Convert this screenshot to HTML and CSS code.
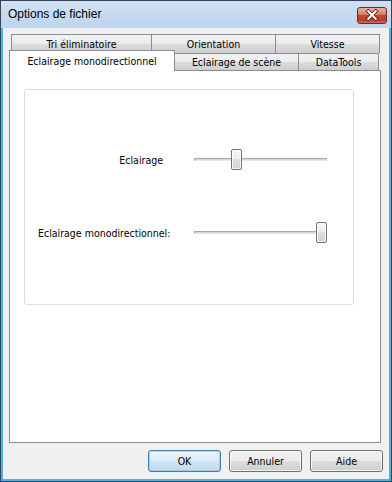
FILE: index.html
```html
<!DOCTYPE html>
<html lang="fr">
<head>
<meta charset="utf-8">
<title>Options de fichier</title>
<link rel="stylesheet" href="styles.css">
</head>
<body>
<div class="window">
  <div class="titlebar">
    <span class="title">Options de fichier</span>
    <div class="close">
      <svg width="30" height="16" viewBox="0 0 30 16">
        <path d="M11 4 L19 12 M19 4 L11 12" stroke="#5a1a12" stroke-width="4" stroke-linecap="square" fill="none"/>
        <path d="M11 4 L19 12 M19 4 L11 12" stroke="#ffffff" stroke-width="2.2" stroke-linecap="square" fill="none"/>
      </svg>
    </div>
  </div>
  <div class="frame">
    <div class="client">
      <div class="tabs">
        <div class="tabrow back">
          <div class="tab t1">Tri éliminatoire</div>
          <div class="tab t2">Orientation</div>
          <div class="tab t3">Vitesse</div>
        </div>
        <div class="tabrow front">
          <div class="tab sel">Eclairage monodirectionnel</div>
          <div class="tab t5">Eclairage de scène</div>
          <div class="tab t6">DataTools</div>
        </div>
        <div class="panel">
          <div class="group">
            <div class="row">
              <span class="lbl lbl1">Eclairage</span>
              <div class="slider">
                <div class="track"></div>
                <div class="thumb" style="left:37px"></div>
              </div>
            </div>
            <div class="row">
              <span class="lbl lbl2">Eclairage monodirectionnel:</span>
              <div class="slider">
                <div class="track"></div>
                <div class="thumb" style="left:122px"></div>
              </div>
            </div>
          </div>
        </div>
      </div>
      <div class="buttons">
        <button class="btn default">OK</button>
        <button class="btn">Annuler</button>
        <button class="btn">Aide</button>
      </div>
    </div>
  </div>
</div>
</body>
</html>
```

FILE: styles.css
```css
* { box-sizing: border-box; }
html, body { margin: 0; padding: 0; background: #ffffff; }
body { font-family: "DejaVu Sans Condensed", "DejaVu Sans", sans-serif; }

.window {
  width: 392px;
  height: 482px;
  border: 1px solid #33455c;
  background: linear-gradient(#d0e1f4, #bcd3ed 28px, #bcd3ed);
  display: flex;
  flex-direction: column;
}

.titlebar {
  height: 27px;
  display: flex;
  align-items: center;
  justify-content: space-between;
  padding: 0 4px 2px 7px;
}
.title {
  font-family: "Liberation Sans", Arial, sans-serif;
  font-size: 12px;
  color: #000;
}
.close {
  width: 30px;
  height: 17px;
  margin-top: 3px;
  border: 1px solid #6e2a22;
  border-radius: 3px;
  background: linear-gradient(#e9ae9f, #d77a66 45%, #c44a36 50%, #b53a28 80%, #d0705a);
  display: flex;
  align-items: center;
  justify-content: center;
}
.close svg { display: block; }

.frame {
  flex: 1;
  display: flex;
  padding: 0 2px 2px 2px;
  background: #4cb2e2;
}
.client {
  flex: 1;
  background: #f0f0f0;
  display: flex;
  flex-direction: column;
  padding: 6px 0 0 6px;
}

.tabs {
  width: 372px;
  display: flex;
  flex-direction: column;
}
.tabrow {
  display: flex;
  align-items: flex-end;
  position: relative;
}
.tabrow.back {
  height: 19px;
  padding-left: 2px;
}
.tabrow.front {
  height: 20px;
  margin-top: -3px;
  z-index: 1;
}
.tab {
  font-size: 10.5px;
  color: #000;
  border: 1px solid #898c95;
  border-bottom: none;
  background: linear-gradient(#f3f3f3, #ebebeb 50%, #dddddd 50%, #cfcfcf);
  display: flex;
  align-items: center;
  justify-content: center;
  white-space: nowrap;
  margin-left: -1px;
}
.tabrow.back .tab { height: 19px; }
.tabrow.back .tab:first-child { margin-left: 0; }
.t1 { width: 141px; }
.t2 { width: 125px; }
.t3 { width: 105px; }
.t5 { width: 125px; height: 17px; }
.t6 { width: 81px; height: 17px; }
.tab.sel {
  width: 166px;
  height: 21px;
  margin-left: 0;
  margin-bottom: -1px;
  background: #ffffff;
  position: relative;
  z-index: 2;
  padding-bottom: 1px;
}

.panel {
  height: 373px;
  border: 1px solid #898c95;
  background: #ffffff;
  position: relative;
  z-index: 0;
  padding: 18px 0 0 14px;
}

.group {
  width: 330px;
  height: 216px;
  border: 1px solid #d5dfe5;
  border-radius: 3px;
  padding-top: 58px;
  display: flex;
  flex-direction: column;
  gap: 50px;
}
.row {
  display: grid;
  grid-template-columns: 169px 133px;
  align-items: center;
  height: 23px;
}
.lbl {
  font-size: 10.5px;
  color: #000;
  white-space: nowrap;
}
.lbl1 { text-align: right; padding-right: 31px; }
.lbl2 { padding-left: 13px; }

.slider {
  position: relative;
  height: 23px;
}
.track {
  position: absolute;
  left: 0;
  right: 0;
  top: 10px;
  height: 3px;
  border-top: 1px solid #a8a8a8;
  border-bottom: 1px solid #e8e8e8;
  background: #d6d6d6;
  border-left: 1px solid #9a9a9a;
  border-right: 1px solid #c8c8c8;
}
.thumb {
  position: absolute;
  top: 1px;
  width: 11px;
  height: 21px;
  border: 1px solid #6f747a;
  border-radius: 2px;
  background: linear-gradient(#f7f7f7, #ececec 45%, #dedede 50%, #d2d2d2);
  box-shadow: inset 0 0 0 1px rgba(255,255,255,0.8);
}

.buttons {
  display: flex;
  justify-content: flex-end;
  gap: 8px;
  padding-right: 6px;
  margin-top: 7px;
}
.btn {
  width: 73px;
  height: 22px;
  font-family: "DejaVu Sans Condensed", "DejaVu Sans", sans-serif;
  font-size: 10.5px;
  color: #000;
  border: 1px solid #707070;
  border-radius: 3px;
  background: linear-gradient(#f2f2f2, #ebebeb 50%, #dddddd 50%, #cfcfcf);
  box-shadow: inset 0 0 0 1px rgba(255,255,255,0.7);
  padding: 0;
}
.btn.default {
  border-color: #3c7fb1;
  background: linear-gradient(#eaf4fc, #dcebf9 50%, #cde2f5 50%, #c3dbf1);
  box-shadow: inset 0 0 0 1px rgba(120,200,240,0.6);
}
```
